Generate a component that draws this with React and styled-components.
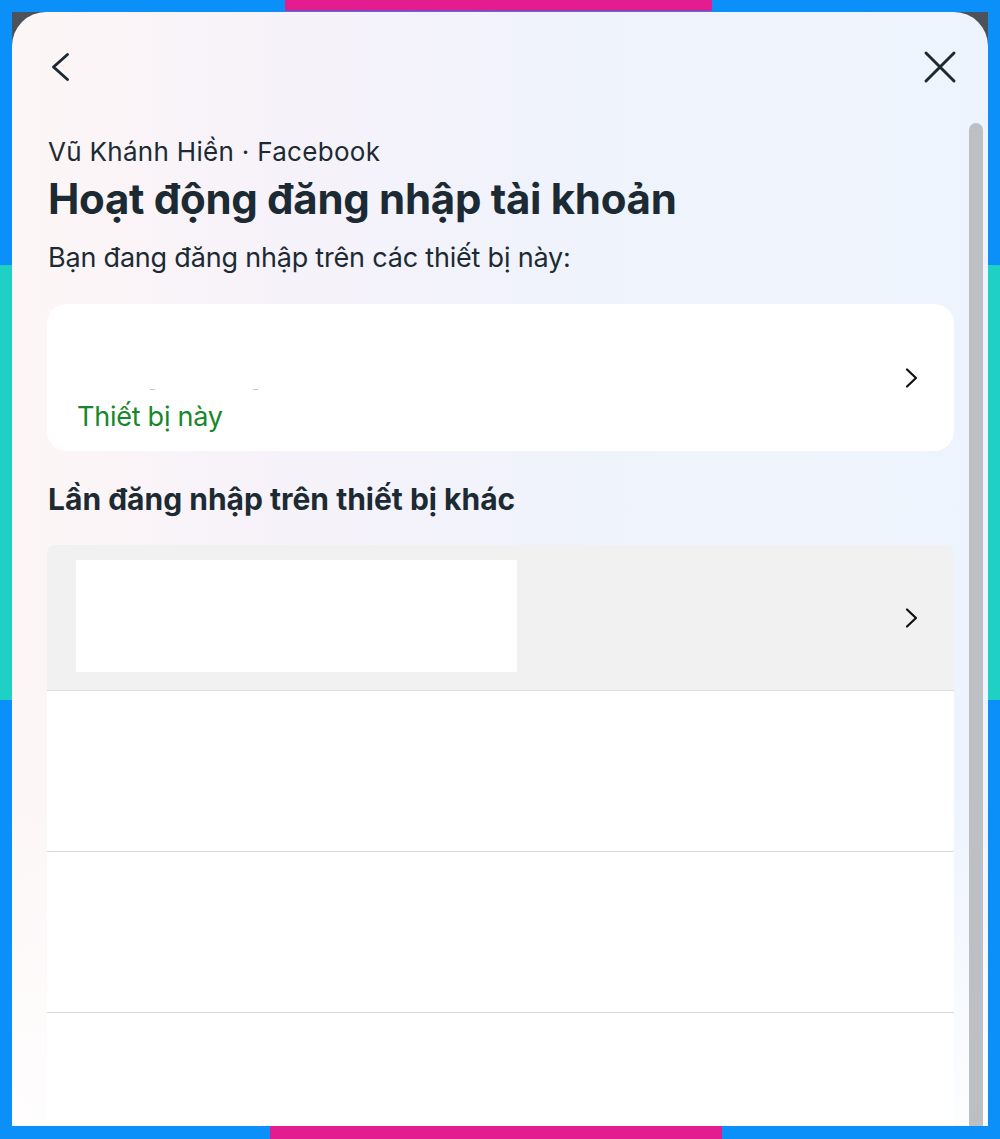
import React from "react";
import styled, { createGlobalStyle } from "styled-components";

const GlobalStyle = createGlobalStyle`
  html, body {
    margin: 0;
    padding: 0;
  }
  body {
    font-family: Inter, "Noto Sans", sans-serif;
    color: #1c2b33;
  }
`;

// blue frame with the coloured marker bars on its edges
const Frame = styled.div`
  width: 1000px;
  height: 1139px;
  box-sizing: border-box;
  padding: 12px 12px 13px 12px;
  background:
    linear-gradient(#e31d8f, #e31d8f) 285px 0 / 427px 11px no-repeat,
    linear-gradient(#e31d8f, #e31d8f) 270px 1126px / 452px 13px no-repeat,
    linear-gradient(#1fd0c5, #1fd0c5) 0 265px / 12px 435px no-repeat,
    linear-gradient(#1fd0c5, #1fd0c5) 988px 265px / 12px 435px no-repeat,
    #0b8ff8;
`;

const Shell = styled.div`
  height: 100%;
  background: linear-gradient(#4b5259, #4b5259) 0 0 / 100% 40px no-repeat;
`;

const Modal = styled.div`
  height: 100%;
  border-radius: 34px 34px 0 0;
  overflow: hidden;
  display: flex;
  flex-direction: column;
  background:
    linear-gradient(180deg, rgba(255, 255, 255, 0) 70%, rgba(255, 255, 255, 0.85) 100%),
    linear-gradient(90deg, #fdf6f6 0%, #f6f2fa 30%, #eff3fc 60%, #eef4fd 100%);
`;

const Header = styled.div`
  display: flex;
  justify-content: space-between;
  align-items: center;
  padding: 38px 31px 0 36px;
  height: 34px;
`;

const IconButton = styled.button`
  border: 0;
  background: none;
  padding: 0;
  width: ${(p) => p.$w}px;
  height: 34px;
  display: flex;
  align-items: center;
  justify-content: flex-start;
  color: #1c2b33;
`;

const Body = styled.div`
  flex: 1;
  display: flex;
  margin-top: 39px;
  min-height: 0;
`;

const Content = styled.div`
  flex: 1;
  padding: 13px 15px 0 35px;
`;

const ScrollThumb = styled.div`
  width: 14px;
  margin-right: 5px;
  background: #bcc0c4;
  border-radius: 7px 7px 0 0;
`;

const Subtitle = styled.div`
  font-size: 26px;
  line-height: 32px;
  margin: 0 0 0 1px;
  letter-spacing: 0.3px;
`;

const Title = styled.h1`
  margin: 6px 0 0 1px;
  font-size: 42px;
  line-height: 50px;
  font-weight: 700;
  letter-spacing: -0.3px;
`;

const Lead = styled.p`
  margin: 17px 0 0 1px;
  font-size: 27px;
  line-height: 34px;
  letter-spacing: -0.2px;
`;

const Card = styled.div`
  margin-top: 29px;
  height: 147px;
  background: #fff;
  border-radius: 20px;
  display: flex;
  align-items: center;
  padding: 0 34px 0 30px;
`;

const CardMain = styled.div`
  flex: 1;
  align-self: stretch;
  display: flex;
  flex-direction: column;
  justify-content: flex-end;
  padding-bottom: 17px;
`;

const Ticks = styled.div`
  display: flex;
  gap: 98px;
  padding-left: 73px;
  margin-bottom: 10px;
`;

const Tick = styled.span`
  width: 5px;
  height: 1px;
  background: #c8cbce;
`;

const Current = styled.div`
  font-size: 27px;
  line-height: 34px;
  letter-spacing: -0.25px;
  color: #17882a;
`;

const SectionTitle = styled.h2`
  margin: 29px 0 0 1px;
  font-size: 30px;
  line-height: 38px;
  font-weight: 700;
`;

const List = styled.div`
  margin-top: 27px;
  border-radius: 8px 8px 0 0;
  overflow: hidden;
`;

const Row = styled.div`
  height: ${(p) => p.$h}px;
  background: ${(p) => (p.$muted ? "#f1f1f1" : "#fff")};
  border-bottom: 1px solid #d9dbdd;
  display: flex;
  align-items: center;
  padding: 0 34px 0 29px;
`;

const Redacted = styled.div`
  align-self: flex-start;
  width: 441px;
  height: 112px;
  background: #fff;
  margin-top: 15px;
`;

const Spacer = styled.div`
  flex: 1;
`;

const Chevron = () => (
  <svg width="16" height="22" viewBox="0 0 16 22" fill="none">
    <path d="M3 2.5l9 8.5-9 8.5" stroke="#111" strokeWidth="2.2" strokeLinecap="round" strokeLinejoin="round" />
  </svg>
);

const BackIcon = () => (
  <svg width="24" height="32" viewBox="0 0 24 32" fill="none">
    <path d="M19.5 3.5L5.5 16l14 12.5" stroke="#1c2b33" strokeWidth="3" strokeLinecap="round" strokeLinejoin="round" />
  </svg>
);

const CloseIcon = () => (
  <svg width="34" height="34" viewBox="0 0 34 34" fill="none">
    <path d="M3 3l28 28M31 3L3 31" stroke="#1c2b33" strokeWidth="3" strokeLinecap="round" />
  </svg>
);

export default function App() {
  return (
    <>
      <GlobalStyle />
      <Frame>
        <Shell>
          <Modal>
            <Header>
              <IconButton $w={28} aria-label="Quay lại">
                <BackIcon />
              </IconButton>
              <IconButton $w={34} aria-label="Đóng">
                <CloseIcon />
              </IconButton>
            </Header>
            <Body>
              <Content>
                <Subtitle>Vũ Khánh Hiền · Facebook</Subtitle>
                <Title>Hoạt động đăng nhập tài khoản</Title>
                <Lead>Bạn đang đăng nhập trên các thiết bị này:</Lead>
                <Card>
                  <CardMain>
                    <Ticks>
                      <Tick />
                      <Tick />
                    </Ticks>
                    <Current>Thiết bị này</Current>
                  </CardMain>
                  <Chevron />
                </Card>
                <SectionTitle>Lần đăng nhập trên thiết bị khác</SectionTitle>
                <List>
                  <Row $h={145} $muted>
                    <Redacted />
                    <Spacer />
                    <Chevron />
                  </Row>
                  <Row $h={160} />
                  <Row $h={160} />
                  <Row $h={160} />
                </List>
              </Content>
              <ScrollThumb />
            </Body>
          </Modal>
        </Shell>
      </Frame>
    </>
  );
}
